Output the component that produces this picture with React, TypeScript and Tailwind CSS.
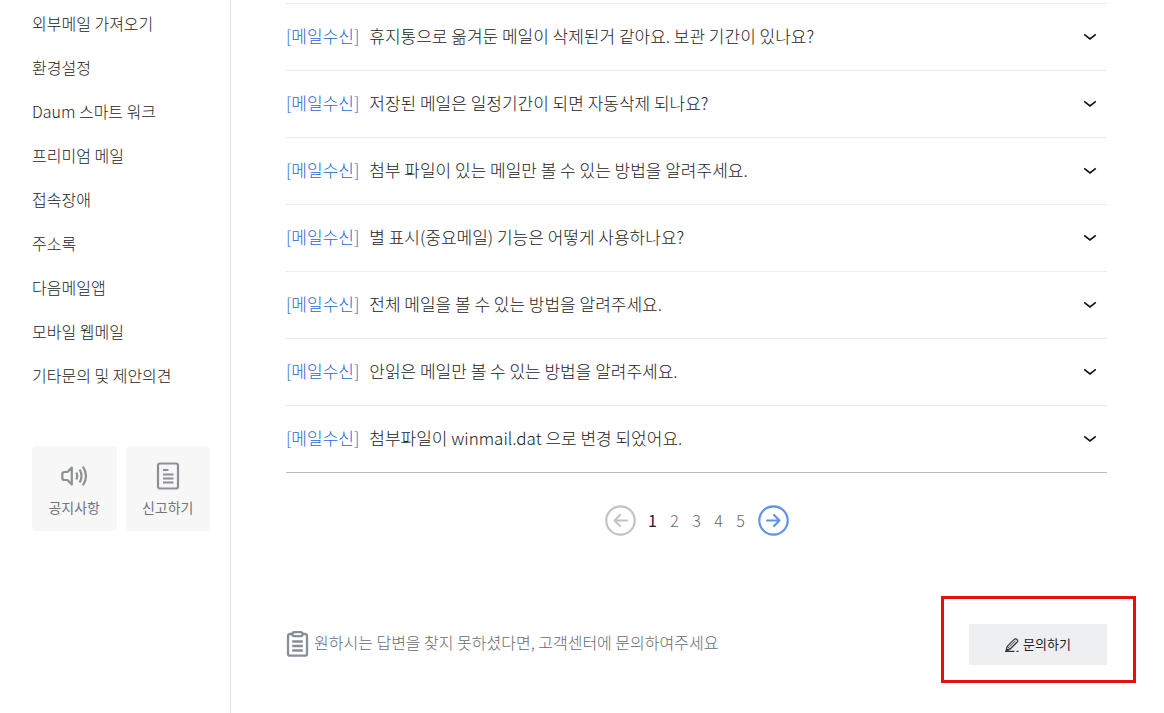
const menu: string[] = [
  '외부메일 가져오기',
  '환경설정',
  'Daum 스마트 워크',
  '프리미엄 메일',
  '접속장애',
  '주소록',
  '다음메일앱',
  '모바일 웹메일',
  '기타문의 및 제안의견',
];

const questions: string[] = [
  '휴지통으로 옮겨둔 메일이 삭제된거 같아요. 보관 기간이 있나요?',
  '저장된 메일은 일정기간이 되면 자동삭제 되나요?',
  '첨부 파일이 있는 메일만 볼 수 있는 방법을 알려주세요.',
  '별 표시(중요메일) 기능은 어떻게 사용하나요?',
  '전체 메일을 볼 수 있는 방법을 알려주세요.',
  '안읽은 메일만 볼 수 있는 방법을 알려주세요.',
  '첨부파일이 winmail.dat 으로 변경 되었어요.',
];

function SpeakerIcon() {
  return (
    <svg width="28" height="28" viewBox="0 0 28 28" fill="none" stroke="#8c9096" strokeWidth="2.200" aria-hidden="true">
      <path d="M11.800 5.600v17L7.400 18H4.500Q2.300 18 2.300 15.800v-3.600Q2.300 10 4.500 10h2.900z" strokeLinejoin="round" />
      <path d="M16.300 10.500q1.800 3.500 0 7M19.600 7.500q3.800 6.500 0 13M22.900 4.500q6.200 9.500 0 19" />
    </svg>
  );
}

function ReportIcon() {
  return (
    <svg width="24" height="28" viewBox="0 0 24 28" fill="none" stroke="#8c9096" strokeWidth="2.200" aria-hidden="true">
      <rect x="2" y="1.500" width="20" height="25" rx="2" />
      <path d="M7 8h5.500M7 12.500h10.500M7 16.500h10.500M7 20.500h10.500" />
    </svg>
  );
}

function ClipboardIcon() {
  return (
    <svg width="23" height="26" viewBox="0 0 22 26" fill="none" stroke="#868e99" strokeWidth="2.300" aria-hidden="true">
      <path d="M6 3H3.500Q1.500 3 1.500 5v17.700q0 2 2 2h15q2 0 2-2V5q0-2-2-2H16" />
      <rect x="6" y="1.200" width="10" height="4" rx="2" />
      <path d="M5.700 10.500h10.600M5.700 15h10.600M5.700 19.500h10.600" />
    </svg>
  );
}

function PencilIcon() {
  return (
    <svg width="14" height="14" viewBox="0 0 14 14" fill="none" stroke="#333" strokeWidth="1.200" aria-hidden="true">
      <path d="M1.300 11.800 2.200 8.400 9.300 1.300Q10.600.2 12 1.400q1.300 1.300.2 2.600L5.200 11z" strokeLinejoin="round" />
      <path d="M2.200 8.400 5.200 11M4.400 8.900l6.200-6.200" strokeWidth=".9" />
      <path d="M0 13.300h9.500M11.500 13.300h2" />
      <path d="M.5 13.500 1.500 10.500 4.500 12.800z" fill="#333" stroke="none" />
    </svg>
  );
}

function ChevronIcon() {
  return (
    <svg width="14" height="8" viewBox="0 0 14 8" fill="none" stroke="#111" strokeWidth="1.600" aria-hidden="true">
      <path d="m1.200 1.400 5.800 4.600 5.800-4.600" />
    </svg>
  );
}

function ArrowIcon({ next = false }: { next?: boolean }) {
  return (
    <svg
      width="31"
      height="31"
      viewBox="0 0 31 31"
      fill="none"
      stroke={next ? '#6293e8' : '#c2c4c9'}
      strokeWidth="2.200"
      aria-hidden="true"
    >
      <circle cx="15.500" cy="15.500" r="14.200" />
      <path
        d={next ? 'M9 15.500h12.500M16 10l5.500 5.500L16 21' : 'M22 15.500H9.500M15 10l-5.500 5.500L15 21'}
        strokeLinecap="round"
        strokeLinejoin="round"
      />
    </svg>
  );
}

export default function App() {
  return (
    <div className="flex min-h-screen bg-white font-['Noto_Sans_CJK_KR','Noto_Sans',sans-serif] font-light text-[#222]">
      <aside className="w-[231px] shrink-0 border-r border-[#e1e1e1] pt-0.5 pr-5 pl-8">
        <nav>
          <ul>
            {menu.map((item) => (
              <li key={item}>
                <a href="#" className="flex h-11 items-center pb-0.5 text-base whitespace-nowrap">
                  {item}
                </a>
              </li>
            ))}
          </ul>
        </nav>
        <div className="mt-12 flex gap-[9px] text-sm font-normal text-[#6f7782]">
          <a href="#" className="flex h-[85px] flex-1 flex-col items-center rounded bg-[#f7f7f7] pt-4">
            <SpeakerIcon />
            <span className="mt-[7px] leading-5">공지사항</span>
          </a>
          <a href="#" className="flex h-[85px] flex-1 flex-col items-center rounded bg-[#f7f7f7] pt-4">
            <ReportIcon />
            <span className="mt-[7px] leading-5">신고하기</span>
          </a>
        </div>
      </aside>

      <main className="min-w-0 flex-1 pt-[3px] pr-[57px] pl-[55px]">
        <ul className="border-b border-[#bbb]">
          {questions.map((question) => (
            <li key={question} className="border-t border-[#ededed]">
              <button type="button" className="flex h-[66px] w-full items-center pr-2.5 text-left text-[17px]">
                <span className="mr-2.5 pb-0.5 text-[#1f68d6]">[메일수신]</span>
                <span className="flex-1 pb-0.5">{question}</span>
                <ChevronIcon />
              </button>
            </li>
          ))}
        </ul>

        <nav aria-label="페이지" className="mt-8 flex h-[31px] items-center justify-center gap-1.5 text-base">
          <button type="button" aria-label="이전">
            <ArrowIcon />
          </button>
          <div className="flex pb-0.5 text-[#666]">
            <a href="#" aria-current="page" className="w-[22px] text-center font-normal text-[#222]">1</a>
            {[2, 3, 4, 5].map((page) => (
              <a key={page} href="#" className="w-[22px] text-center">
                {page}
              </a>
            ))}
          </div>
          <button type="button" aria-label="다음">
            <ArrowIcon next />
          </button>
        </nav>

        <div className="mt-[88px] flex items-center justify-between">
          <p className="flex items-center gap-[5px] pb-0.5 text-base text-[#666c74]">
            <ClipboardIcon />
            <span className="pb-[3px]">원하시는 답변을 찾지 못하셨다면, 고객센터에 문의하여주세요</span>
          </p>
          <div className="relative">
            <button
              type="button"
              className="flex h-[41px] w-[138px] items-center justify-center gap-1 bg-[#eeeff1] text-[13px] font-normal text-[#222]"
            >
              <PencilIcon />
              <span className="pb-0.5">문의하기</span>
            </button>
            <div className="pointer-events-none absolute -top-7 -right-[29px] -bottom-[18px] -left-7 border-3 border-[#e60f0f]" />
          </div>
        </div>
      </main>
    </div>
  );
}
